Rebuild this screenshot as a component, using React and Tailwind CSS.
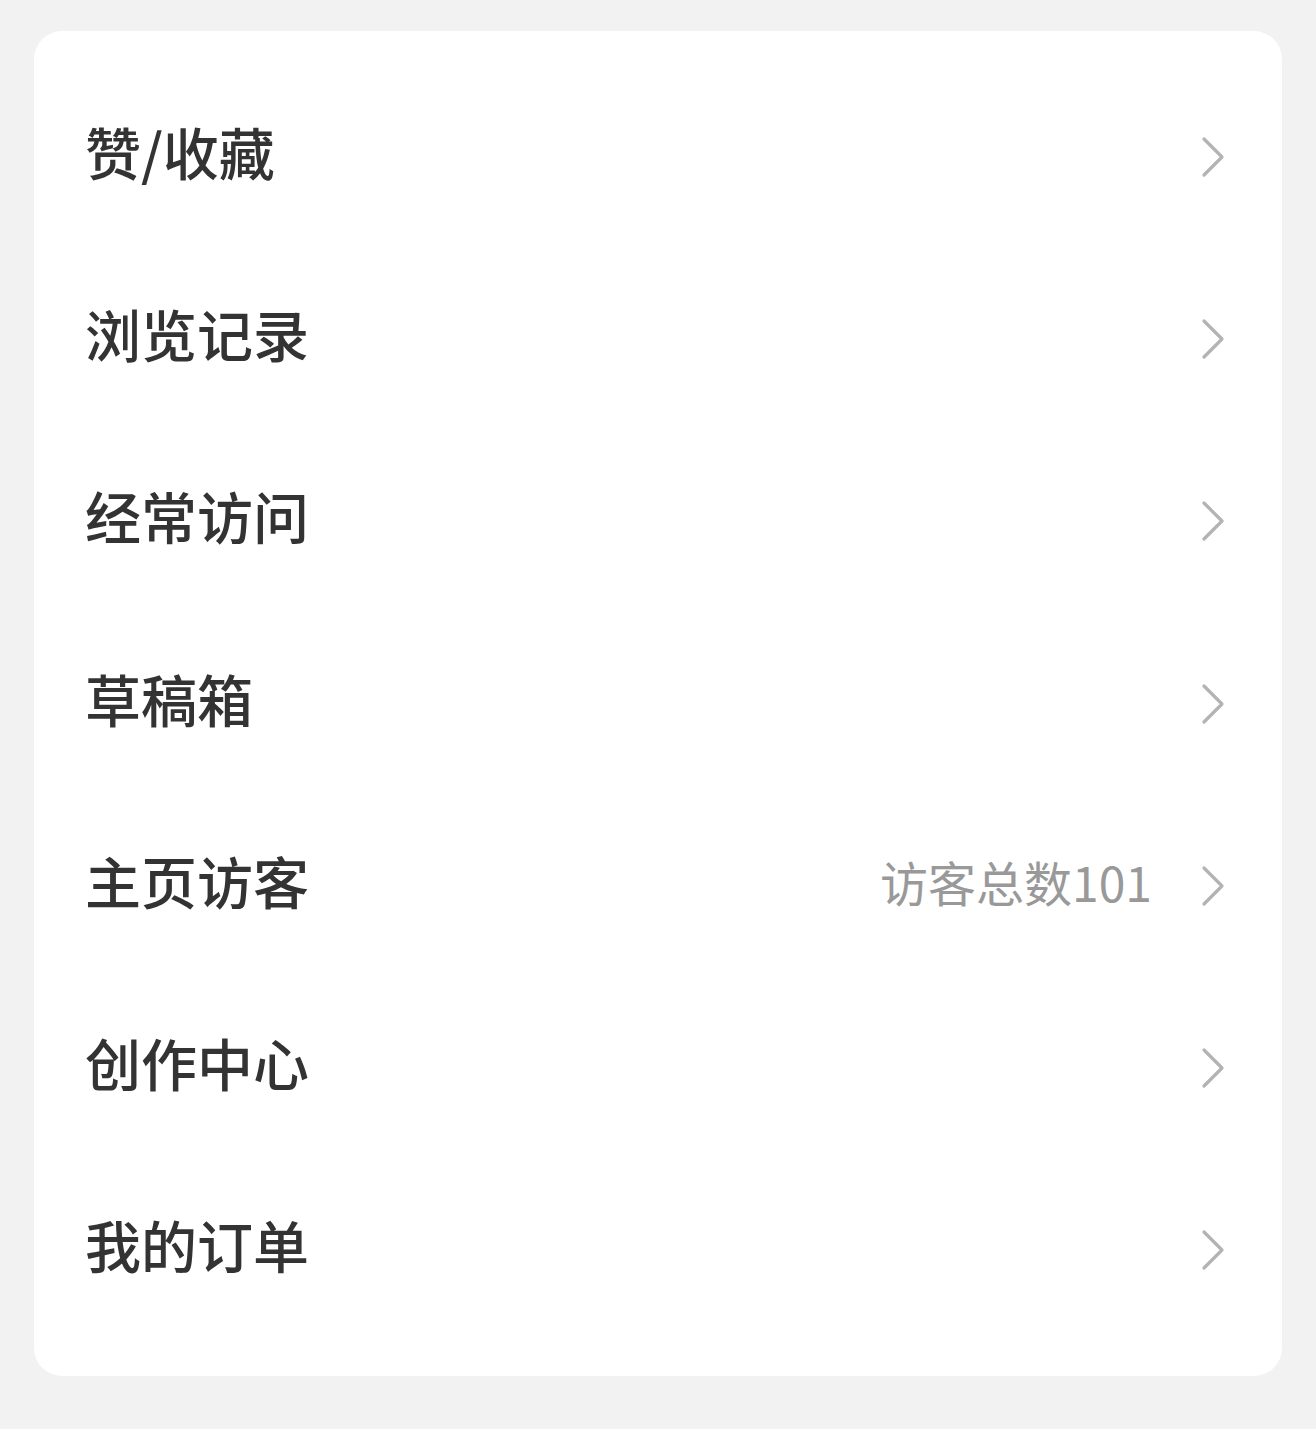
import React from 'react';

const ITEMS = [
  { label: '赞/收藏' },
  { label: '浏览记录' },
  { label: '经常访问' },
  { label: '草稿箱' },
  { label: '主页访客', extra: '访客总数101' },
  { label: '创作中心' },
  { label: '我的订单' },
];

function Chevron() {
  return (
    <svg width="26" height="42" viewBox="0 0 26 42" fill="none" className="flex-shrink-0 mt-[3px]">
      <path d="M4 3 L22 21 L4 39" stroke="#b3b3b3" strokeWidth="3.2" strokeLinecap="round" strokeLinejoin="round" />
    </svg>
  );
}

export default function App() {
  return (
    <div
      className="min-h-[1429px] bg-[#f2f2f2] pt-[31px] px-[34px]"
      style={{ fontFamily: '"Noto Sans CJK SC", "Noto Sans", sans-serif' }}
    >
      <div className="bg-white rounded-[28px] pt-[33px] pb-[36px] pl-[51px] pr-[56px]">
        {ITEMS.map(({ label, extra }) => (
          <div key={label} className="h-[182.3px] flex items-center">
            <span className="flex-1 text-[56px] leading-none text-[#333333] pb-[9px] font-medium">{label}</span>
            {extra && (
              <span className="text-[48px] leading-none text-[#999999] mr-[48px] pb-[7px]">{extra}</span>
            )}
            <Chevron />
          </div>
        ))}
      </div>
    </div>
  );
}
